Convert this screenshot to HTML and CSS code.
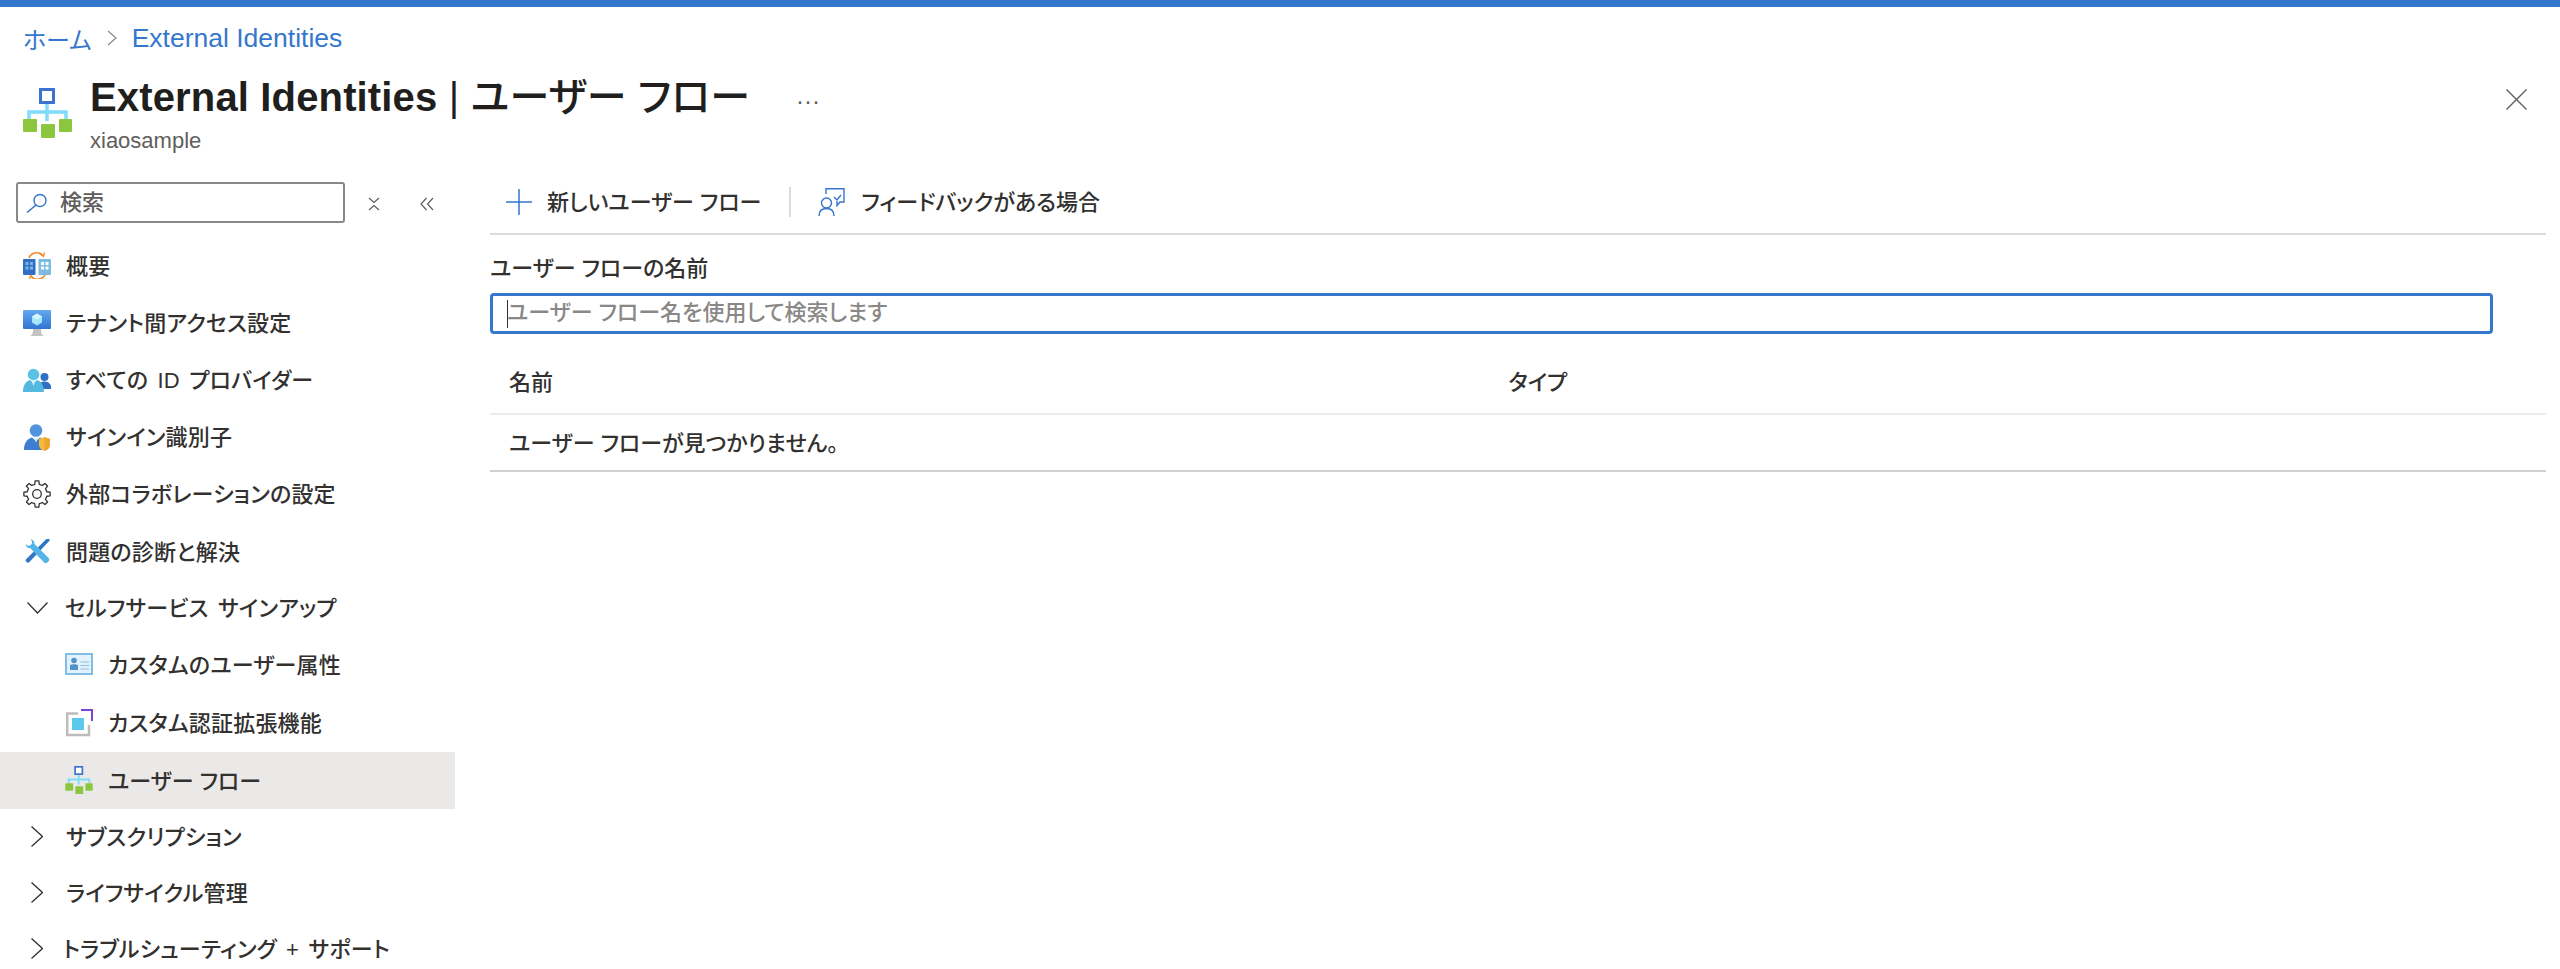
FILE: index.html
```html
<!DOCTYPE html>
<html lang="ja">
<head>
<meta charset="utf-8">
<title>External Identities | ユーザー フロー</title>
<link rel="stylesheet" href="styles.css">
</head>
<body>
<svg class="defs" width="0" height="0" aria-hidden="true">
  <symbol id="flow" viewBox="0 0 49 50">
    <path d="M24 15V33M6 31V24H43V31" fill="none" stroke="#7fdcfb" stroke-width="3.500"/>
    <rect x="17.500" y="1.500" width="13" height="13" fill="#fff" stroke="#3a72cf" stroke-width="3"/>
    <rect x="0" y="31" width="14" height="13" rx="1" fill="#8cc63f"/>
    <rect x="18" y="36" width="14" height="14" rx="1" fill="#8cc63f"/>
    <rect x="36" y="31" width="13" height="13" rx="1" fill="#8cc63f"/>
  </symbol>
  <path id="tooth" d="M10.17 4.76L11.75 4.26L12.15 .9H15.85L16.25 4.26L17.83 4.76"/>
</svg>

<div class="topbar"></div>

<nav class="crumbs">
  <a class="crumb">ホーム</a>
  <svg class="crumb-sep" viewBox="0 0 10 16"><path d="M1 1L9 8L1 15" fill="none" stroke="#8a8886" stroke-width="1.200"/></svg>
  <a class="crumb crumb-latin">External Identities</a>
</nav>

<header class="head">
  <svg class="head-icon"><use href="#flow"/></svg>
  <div class="head-text">
    <h1 class="title"><span class="title-latin">External Identities</span> | ユーザー フロー</h1>
    <div class="subtitle">xiaosample</div>
  </div>
  <div class="more">···</div>
  <svg class="close" viewBox="0 0 21 21"><path d="M.5 .5L20.500 20.500M20.500 .5L.5 20.500" fill="none" stroke="#605e5c" stroke-width="1.400"/></svg>
</header>

<div class="main">
  <aside class="side">
    <div class="side-top">
      <div class="search">
        <svg class="search-icon" viewBox="0 0 22 20"><circle cx="14" cy="7.500" r="6" fill="none" stroke="#3577cc" stroke-width="1.400"/><path d="M10 12L1 19.500" fill="none" stroke="#3577cc" stroke-width="1.600"/></svg>
        <span class="search-text">検索</span>
      </div>
      <svg class="tool-a" viewBox="0 0 12 14"><path d="M1 1L6 5.500L11 1M1 13L6 8.500L11 13" fill="none" stroke="#605e5c" stroke-width="1.200"/></svg>
      <svg class="tool-b" viewBox="0 0 14 14"><path d="M6.500 1L1 7L6.500 13M13 1L7.500 7L13 13" fill="none" stroke="#605e5c" stroke-width="1.200"/></svg>
    </div>

    <a class="row">
      <svg class="ico" viewBox="0 0 28 28">
        <g transform="translate(0 1)">
        <rect x="0" y="7" width="12.500" height="16" rx="1" fill="#2f6fc4"/>
        <rect x="15.500" y="7" width="12.500" height="16" rx="1" fill="#7dbbe0"/>
        <path d="M2.500 10h3v3h-3zM7 10h3v3H7zM2.500 14.500h3v3h-3zM7 14.500h3v3H7z" fill="#7fb2e5"/>
        <path d="M18 10h3v3h-3zM22.500 10h3v3h-3zM18 14.500h3v3h-3zM22.500 14.500h3v3h-3z" fill="#fff"/>
        <path d="M6 6C7 2.500 11 .5 14 .8C17 1 19 2 20 4M22 23C21 26 17 27.500 14 27.200C11 27 9 26 8 24" fill="none" stroke="#ef8a2c" stroke-width="1.600"/>
        <path d="M16.500 1.500L20.500 4.500L21.500 .5M11 26.500L7.500 23.500L6.500 27" fill="none" stroke="#ef8a2c" stroke-width="1.300"/>
        </g>
      </svg>
      <span class="label">概要</span>
    </a>
    <a class="row">
      <svg class="ico" viewBox="0 0 28 28">
        <defs><linearGradient id="scr" x1="0" y1="0" x2="0" y2="1"><stop offset="0" stop-color="#64a8f0"/><stop offset="1" stop-color="#2f74d0"/></linearGradient></defs>
        <g transform="translate(0 2)">
        <path d="M7 26C9 25 10 24 10 19H18C18 24 19 25 21 26Z" fill="#c4c4c4"/>
        <rect x="0" y="0" width="28" height="19" rx="1" fill="url(#scr)"/>
        <path d="M14 3.500L19 6.500V12.500L14 15.500L9 12.500V6.500Z" fill="#a5e8fb"/>
        <path d="M14 9.500L19 6.500L14 3.500L9 6.500Z" fill="#d6f5ff"/>
        </g>
      </svg>
      <span class="label">テナント間アクセス設定</span>
    </a>
    <a class="row">
      <svg class="ico" viewBox="0 0 28 28">
        <circle cx="21.500" cy="12" r="4" fill="#2f6fc4"/>
        <path d="M15 24C15 19 18 16.500 21.500 16.500C25.500 16.500 28.500 19 28.500 24Z" fill="#2f6fc4"/>
        <circle cx="10.500" cy="9.500" r="5.800" fill="#5cc1e6"/>
        <path d="M0 27C0 20 3 16 7 15L10.500 18L14 15C18 16 21 20 21 27Z" fill="#55b8de"/>
        <path d="M8.500 15.500L10.500 21L12.500 15.500Z" fill="#d8f2fb"/>
      </svg>
      <span class="label">すべての ID プロバイダー</span>
    </a>
    <a class="row">
      <svg class="ico" viewBox="0 0 28 28">
        <circle cx="13" cy="7.500" r="6.300" fill="#4f94dc"/>
        <path d="M1 27C1 20 4 16 9 14.500L13 18L17 14.500C20 15.500 23 20 23 27Z" fill="#3d7ed0"/>
        <path d="M11 15L13 19.500L15 15Z" fill="#d6e8fa"/>
        <path d="M21.500 14L27 16V21.500C27 25 24.500 27 21.500 28C18.500 27 16 25 16 21.500V16Z" fill="#f6b93b"/>
        <path d="M21.500 14L27 16V21.500C27 25 24.500 27 21.500 28Z" fill="#eda52b"/>
      </svg>
      <span class="label">サインイン識別子</span>
    </a>
    <a class="row">
      <svg class="ico" viewBox="0 0 28 28" fill="none" stroke="#323130" stroke-width="1.300" stroke-linejoin="round">
        <use href="#tooth"/>
        <use href="#tooth" transform="rotate(45 14 14)"/>
        <use href="#tooth" transform="rotate(90 14 14)"/>
        <use href="#tooth" transform="rotate(135 14 14)"/>
        <use href="#tooth" transform="rotate(180 14 14)"/>
        <use href="#tooth" transform="rotate(225 14 14)"/>
        <use href="#tooth" transform="rotate(270 14 14)"/>
        <use href="#tooth" transform="rotate(315 14 14)"/>
        <circle cx="14" cy="14" r="4.300"/>
      </svg>
      <span class="label">外部コラボレーションの設定</span>
    </a>
    <a class="row">
      <svg class="ico" viewBox="0 0 28 28">
        <g transform="translate(2 1.500) scale(.89)">
        <path d="M27 .5L28 2L5 26.500C4 27.500 3 27.500 2.500 27L1 25.500C.5 25 .5 24 1.500 23L24 .5Z" fill="#2f77c4"/>
        <path d="M6.500 1C9 1 11 3.500 10.500 6L26.500 22C27.500 23 27.500 24.500 26.500 25.500L25 27C24 28 22.500 28 21.500 27L6 11C3.500 11.500 1 9.500 1 6.500L4 8.500L7.500 6.500L8 4Z" fill="#55b4e6"/>
        </g>
      </svg>
      <span class="label">問題の診断と解決</span>
    </a>
    <a class="row group">
      <svg class="chev-down" viewBox="0 0 21 12"><path d="M.5 .5L10.500 11L20.500 .5" fill="none" stroke="#323130" stroke-width="1.300"/></svg>
      <span class="label">セルフサービス サインアップ</span>
    </a>
    <a class="row sub">
      <svg class="ico" viewBox="0 0 28 28">
        <rect x="1" y="3" width="26" height="20" fill="#e2f1fb" stroke="#7fbfe4" stroke-width="2"/>
        <circle cx="9" cy="9.500" r="2.800" fill="#4f94c8"/>
        <path d="M5 19V14C7 13 11 13 13 14V19Z" fill="#4f94c8"/>
        <path d="M15.500 11H24M15.500 14.500H24M15.500 18H24" stroke="#8cc1e3" stroke-width="1.200"/>
      </svg>
      <span class="label">カスタムのユーザー属性</span>
    </a>
    <a class="row sub">
      <svg class="ico" viewBox="0 0 28 28">
        <path d="M13 4.500H2.200V26H24V16" fill="none" stroke="#bdbdbd" stroke-width="2.500"/>
        <path d="M16 1H27V12" fill="none" stroke="#7b44d8" stroke-width="2"/>
        <rect x="7" y="9" width="12" height="12" fill="#5cc8ee"/>
      </svg>
      <span class="label">カスタム認証拡張機能</span>
    </a>
    <a class="row sub selected">
      <svg class="ico"><use href="#flow"/></svg>
      <span class="label">ユーザー フロー</span>
    </a>
    <a class="row group">
      <svg class="chev-right" viewBox="0 0 12 21"><path d="M.5 .5L11.500 10.500L.5 20.500" fill="none" stroke="#323130" stroke-width="1.300"/></svg>
      <span class="label">サブスクリプション</span>
    </a>
    <a class="row group">
      <svg class="chev-right" viewBox="0 0 12 21"><path d="M.5 .5L11.500 10.500L.5 20.500" fill="none" stroke="#323130" stroke-width="1.300"/></svg>
      <span class="label">ライフサイクル管理</span>
    </a>
    <a class="row group tight">
      <svg class="chev-right" viewBox="0 0 12 21"><path d="M.5 .5L11.500 10.500L.5 20.500" fill="none" stroke="#323130" stroke-width="1.300"/></svg>
      <span class="label">トラブルシューティング + サポート</span>
    </a>
  </aside>

  <section class="content">
    <div class="toolbar">
      <button class="cmd">
        <svg class="plus" viewBox="0 0 26 26"><path d="M13 0V26M0 13H26" stroke="#3577cc" stroke-width="1.500"/></svg>
        <span class="label">新しいユーザー フロー</span>
      </button>
      <div class="cmd-sep"></div>
      <button class="cmd">
        <svg class="fb" viewBox="0 0 28 28" fill="none" stroke="#3577cc" stroke-width="1.400">
          <path d="M9 6V.7H27V14H23L20 17.500V13"/>
          <circle cx="9.500" cy="15" r="5"/>
          <path d="M2 28C2 23 5 20.500 9.500 20.500C14 20.500 17 23 17 28"/>
          <path d="M17 9L20 12L24 7"/>
        </svg>
        <span class="label">フィードバックがある場合</span>
      </button>
    </div>

    <label class="field-label">ユーザー フローの名前</label>
    <div class="input"><i class="caret"></i><span class="placeholder">ユーザー フロー名を使用して検索します</span></div>

    <div class="table-head">
      <div class="col-name">名前</div>
      <div>タイプ</div>
    </div>
    <div class="table-row">ユーザー フローが見つかりません。</div>
  </section>
</div>
</body>
</html>
```
FILE: styles.css
```css
* { box-sizing: border-box; }
html, body { margin: 0; padding: 0; }
body {
  width: 2560px;
  height: 969px;
  overflow: hidden;
  display: flex;
  flex-direction: column;
  background: #fff;
  color: #323130;
  font-family: "Liberation Sans", "Noto Sans CJK JP", sans-serif;
  font-size: 22px;
  font-weight: 500;
  font-feature-settings: "palt";
}
.defs { position: absolute; }
.topbar { height: 7px; background: #3577cc; flex: none; }

.crumbs {
  height: 62px;
  flex: none;
  display: flex;
  align-items: center;
  padding-left: 23px;
}
.crumb { color: #3577cc; font-size: 24px; font-weight: 400; }
.crumb-latin { font-size: 26.500px; }
.crumb-sep { width: 10px; height: 16px; margin: 0 15px; }

.head {
  height: 106px;
  flex: none;
  display: flex;
  align-items: flex-start;
  padding: 0 33px 0 23px;
}
.head-icon { width: 49px; height: 50px; margin: 19px 18px 0 0; flex: none; }
.title {
  margin: 0;
  font-size: 40px;
  font-weight: 500;
  line-height: 56px;
  letter-spacing: .15px;
  color: #201f1e;
}
.title-latin { font-weight: 700; }
.subtitle { margin-top: 1px; line-height: 30px; font-size: 22px; color: #605e5c; }
.more { margin: 4px 0 0 46px; line-height: 56px; font-size: 24px; color: #605e5c; }
.close { width: 21px; height: 21px; margin: 20px 0 0 auto; flex: none; }

.main { flex: 1; display: flex; min-height: 0; }

.side { width: 455px; flex: none; }
.side-top { height: 61.500px; display: flex; align-items: flex-start; padding: 7px 0 0 16px; }
.search {
  width: 329px;
  height: 41px;
  border: 2px solid #8a8886;
  border-radius: 3px;
  display: flex;
  align-items: center;
  padding-left: 8px;
}
.search-icon { width: 22px; height: 20px; flex: none; }
.search-text { margin-left: 12px; padding-bottom: 12px; height: 37px; color: #605e5c; }
.tool-a { width: 12px; height: 14px; margin: 15px 0 0 23px; }
.tool-b { width: 14px; height: 14px; margin: 15px 0 0 40px; }

.row {
  height: 57.200px;
  display: flex;
  align-items: center;
  padding-left: 23px;
  gap: 15px;
}
.label { padding-bottom: 3px; }
.row .label { letter-spacing: .2px; word-spacing: 3px; }
.row.group { height: 56px; }
.row.sub { height: 58px; padding-left: 65px; }
.row.selected { height: 57.300px; background: #ebe9e7; }
.row.selected .label { letter-spacing: 0; word-spacing: 0; }
.ico { width: 28px; height: 28px; flex: none; }
.chev-down { width: 21px; height: 12px; margin: 0 2px 0 4px; flex: none; }
.chev-right { width: 12px; height: 21px; margin: 0 8px 0 8px; flex: none; }
.row.tight { gap: 12px; }

.content { flex: 1; margin-left: 35px; margin-right: 14px; min-width: 0; }
.toolbar {
  height: 60px;
  display: flex;
  align-items: center;
  border-bottom: 2px solid #dcdbd9;
  padding: 0 0 5px 16px;
}
.cmd {
  display: flex;
  align-items: center;
  border: 0;
  background: none;
  padding: 0;
  font: inherit;
  font-feature-settings: inherit;
  color: #323130;
}
.plus { width: 26px; height: 26px; margin-right: 15px; }
.fb { width: 28px; height: 28px; margin-right: 16px; }
.cmd-sep { width: 2px; height: 30px; background: #dcdbd9; margin: 0 26px 0 28px; }

.field-label {
  display: block;
  margin-top: 19px;
  line-height: 30px;
}
.input {
  width: 2003px;
  height: 41px;
  margin-top: 9px;
  border: 3px solid #3577cc;
  border-radius: 4px;
  display: flex;
  align-items: center;
  padding-left: 14px;
}
.caret { width: 1px; height: 28px; margin-right: -1px; background: #323130; flex: none; }
.placeholder { color: #8a8886; padding-bottom: 8px; }

.table-head {
  margin-top: 29px;
  height: 52px;
  display: flex;
  align-items: center;
  padding: 0 0 16px 19px;
  border-bottom: 2px solid #edebe9;
}
.col-name { width: 999.500px; }
.table-row {
  height: 57px;
  display: flex;
  align-items: center;
  padding: 0 0 3px 19px;
  border-bottom: 2px solid #d2d0ce;
}
```
